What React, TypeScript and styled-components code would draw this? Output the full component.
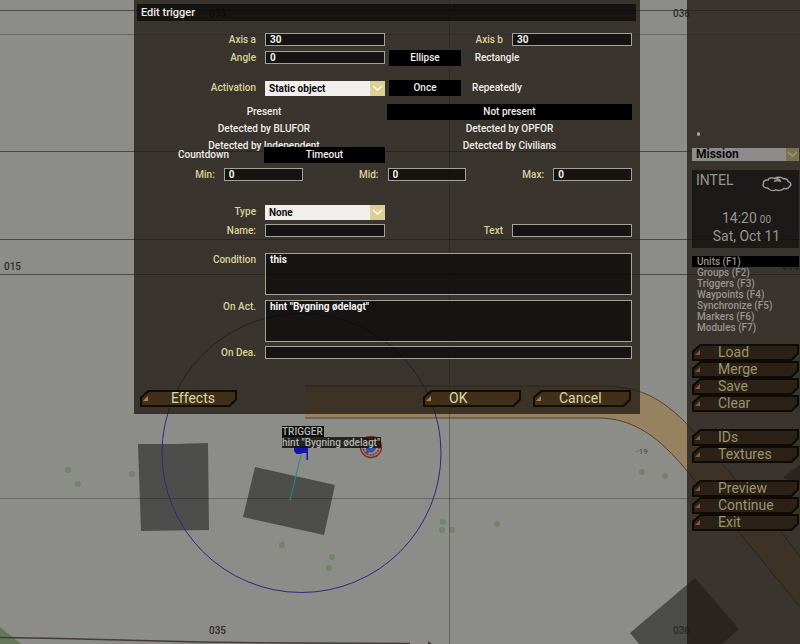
import React from 'react';
import styled, { createGlobalStyle } from 'styled-components';

const GlobalStyle = createGlobalStyle`
  * { box-sizing: border-box; }
  body {
    margin: 0;
    background: #8c8c88;
    font-family: Roboto, 'Liberation Sans', sans-serif;
    font-size: 10px;
    line-height: 12px;
  }
  button, input, select, textarea { font: inherit; color: inherit; margin: 0; }
`;

const Page = styled.div`
  position: relative;
  display: flex;
  align-items: stretch;
  min-height: 100vh;
  overflow: hidden;
`;

const MapLayer = styled.div`
  position: absolute;
  inset: 0;
  background: #8c8c88;
`;

const MapCanvas = styled.svg`
  display: block;
  width: 100%;
  height: 100%;
`;

const MarkerTip = styled.div`
  position: absolute;
  left: 282px;
  top: 426px;
  display: flex;
  flex-direction: column;
  align-items: flex-start;
  color: #b4b4b0;
  font-weight: 500;
  line-height: 11px;
`;

const TipLine = styled.span<{ $faded?: boolean }>`
  background: ${(p) => (p.$faded ? 'rgba(18, 18, 17, 0.85)' : '#0c0c0b')};
  padding-right: 1px;
  white-space: nowrap;
`;

const Main = styled.main`
  position: relative;
  flex: 1;
  min-width: 0;
  padding: 0 47px 0 134px;
`;

const Dialog = styled.form`
  background: rgba(32, 26, 20, 0.77);
  padding: 4px 4px 7px 3px;
`;

const TitleBar = styled.h1`
  margin: 0;
  padding: 0 4px;
  background: rgba(0, 0, 0, 0.6);
  color: #eceae4;
  font-size: 11px;
  font-weight: 500;
  line-height: 17px;
`;

const Body = styled.div`
  padding: 12px 4px 0 6px;
`;

const Row = styled.div<{ $top?: number }>`
  display: grid;
  grid-template-columns: 122fr 120fr 127fr 120fr;
  align-items: start;
  margin-top: ${(p) => p.$top ?? 0}px;
`;

const Label = styled.label`
  padding-right: 9px;
  text-align: right;
  color: #d9d29a;
  font-size: 10px;
  font-weight: 500;
  line-height: 13px;
  white-space: nowrap;
`;

const Field = styled.input`
  display: block;
  width: 100%;
  min-width: 0;
  height: 13px;
  padding: 0 4px;
  border: 1px solid #a3a19c;
  border-radius: 0;
  background: rgba(0, 0, 0, 0.6);
  color: #f2f2f0;
  font-size: 10px;
  font-weight: 700;
  line-height: 11px;
  outline: none;
`;

const WideField = styled(Field)`
  grid-column: 2 / -1;
`;

const CodeArea = styled.textarea`
  grid-column: 2 / -1;
  display: block;
  width: 100%;
  height: 42px;
  padding: 0 4px;
  border: 1px solid #a3a19c;
  border-radius: 0;
  background: rgba(0, 0, 0, 0.6);
  color: #f2f2f0;
  font-weight: 700;
  font-size: 10px;
  line-height: 12px;
  resize: none;
  outline: none;
`;

const SelectBox = styled.div<{ $dim?: boolean }>`
  display: grid;
  grid-template-columns: 1fr ${(p) => (p.$dim ? '13px' : '15px')};
  height: ${(p) => (p.$dim ? '13px' : '15px')};
  background: ${(p) => (p.$dim ? '#8e8b8b' : '#f1efee')};
  color: #0a0a0a;
`;

const SelectInput = styled.select<{ $dim?: boolean }>`
  grid-area: 1 / 1 / 2 / 3;
  width: 100%;
  min-width: 0;
  height: 100%;
  padding: 0 4px;
  border: 0;
  background: transparent;
  appearance: none;
  font-size: ${(p) => (p.$dim ? '12px' : '10px')};
  font-weight: 700;
  line-height: 13px;
  outline: none;
`;

const SelectArrow = styled.span<{ $dim?: boolean }>`
  grid-area: 1 / 2 / 2 / 3;
  display: flex;
  align-items: center;
  justify-content: center;
  background: ${(p) => (p.$dim ? '#7b7350' : '#ddd096')};
  color: ${(p) => (p.$dim ? '#9c9678' : '#fbf8ea')};
  pointer-events: none;
`;

const Toggles = styled.div<{ $columns: string }>`
  display: grid;
  grid-template-columns: ${(p) => p.$columns};
`;

const SideToggles = styled(Toggles)`
  grid-column: 3 / -1;
  margin-top: -1px;
  padding-left: 4px;
`;

const ActivationToggles = styled(Toggles)`
  margin-top: 8px;
  column-gap: 2px;
  row-gap: 1px;
`;

const TimingToggles = styled(Toggles)`
  position: relative;
  margin-top: -7px;
`;

const Toggle = styled.button`
  height: 16px;
  padding: 0;
  border: 0;
  background: transparent;
  color: #eeeeea;
  font-weight: 500;
  line-height: 16px;
  text-align: center;
  white-space: nowrap;

  &[aria-pressed='true'] { background: #000; }
`;

const Timing = styled.div`
  display: grid;
  grid-template-columns: 81fr 79fr 85fr 79fr 87fr 79fr;
  margin-top: 5px;
`;

const Footer = styled.footer`
  display: grid;
  grid-template-columns: 97fr 186fr 98fr 12fr 98fr;
  margin-top: 31px;
  padding: 0 5px 0 3px;
`;

const AngledButton = styled.button<{ $bright?: boolean; $inset?: number; $column?: number }>`
  position: relative;
  grid-column: ${(p) => p.$column ?? 'auto'};
  display: block;
  width: 100%;
  height: 17px;
  padding: 0 0 0 ${(p) => p.$inset ?? 26}px;
  border: 0;
  background: ${(p) => (p.$bright ? '#120c06' : '#0e0b07')};
  clip-path: polygon(8px 0, 100% 0, 100% calc(100% - 7px), calc(100% - 7px) 100%, 0 100%, 0 7px);
  color: ${(p) => (p.$bright ? '#dcd7a6' : '#98946f')};
  font-size: 14px;
  line-height: 17px;
  text-align: left;

  &::before {
    content: '';
    position: absolute;
    inset: 2px;
    background: ${(p) => (p.$bright ? '#40301a' : '#2c2116')};
    clip-path: polygon(7px 0, 100% 0, 100% calc(100% - 6px), calc(100% - 6px) 100%, 0 100%, 0 6px);
  }
`;

const ButtonMark = styled.svg<{ $bright?: boolean }>`
  position: absolute;
  left: 3px;
  top: 6px;
  width: 5px;
  height: 5px;
  fill: ${(p) => (p.$bright ? '#b57d5a' : '#80583f')};
`;

const ButtonText = styled.span`
  position: relative;
  white-space: nowrap;
`;

const Sidebar = styled.aside`
  position: relative;
  flex: 0 0 113px;
  padding: 132px 1px 0 5px;
  background: rgba(32, 26, 20, 0.77);
  color: #98958f;
`;

const Dot = styled.div`
  width: 3px;
  height: 4px;
  margin: 0 0 12px 5px;
  border-radius: 2px;
  background: #a3a19c;
`;

const Intel = styled.section`
  margin-top: 9px;
  padding: 2px 4px 5px;
  height: 78px;
  background: rgba(12, 12, 12, 0.62);
  font-size: 14px;
  line-height: 16px;
`;

const IntelHead = styled.div`
  display: flex;
  justify-content: space-between;
  height: 38px;
`;

const IntelTitle = styled.h2`
  margin: 0;
  font-size: 14px;
  font-weight: 400;
`;

const Cloud = styled.svg`
  width: 30px;
  height: 16px;
  margin: 4px 3px 0 0;
`;

const IntelLine = styled.div`
  line-height: 16px;
  padding-left: 2px;
  text-align: center;
  white-space: nowrap;
`;

const Seconds = styled.small`
  margin-left: 3px;
  font-size: 10px;
`;

const ModeList = styled.nav`
  display: flex;
  flex-direction: column;
  margin: 8px 0 11px;
`;

const Mode = styled.button<{ $active?: boolean }>`
  height: 11px;
  padding: 0 5px;
  border: 0;
  background: ${(p) => (p.$active ? '#000' : 'transparent')};
  font-size: 10px;
  font-weight: 500;
  line-height: 11px;
  text-align: left;
  white-space: nowrap;
`;

const ButtonGroup = styled.div`
  display: flex;
  flex-direction: column;
  margin-bottom: 17px;
`;

const TREES = [
  [68, 470], [78, 484], [132, 474], [282, 545], [332, 557], [329, 568],
  [443, 522], [442, 530], [452, 530], [497, 524], [642, 472], [665, 476],
];

const GRID_LINES = [
  { y: 10, strong: true },
  { y: 34, strong: false },
  { y: 151, strong: true },
  { y: 239, strong: true },
  { y: 274, strong: true },
  { y: 498, strong: false },
];

const ROAD_TOP = 'M305 386 H600 C638 386 660 396 690 427 C706 445 716 457 730 473 L780 530 L800 557';
const ROAD_BOTTOM = 'M305 418 H598 C634 418 660 438 687 471 L737 530 L800 607';

function TerrainMap() {
  return (
    <MapLayer>
      <MapCanvas aria-label="Terrain map">
        <path
          d="M305 386 H600 C638 386 660 396 690 427 C706 445 716 457 730 473 L780 530 L800 557 V607 L737 530 L687 471 C660 438 634 418 598 418 H305 Z"
          fill="#968260"
        />
        <path d={ROAD_TOP} fill="none" stroke="#51432f" />
        <path d={ROAD_BOTTOM} fill="none" stroke="#51432f" />
        <polygon points="0,627 21,644 0,644" fill="#68775a" />
        <polygon points="138,444 176,444 208,443 209,530 141,531" fill="#4d4d4c" />
        <polygon points="255,467 335,485 324,535 243,517" fill="#4d4d4c" />
        <polygon points="695,578 739,629 722,644 639,644 630,633" fill="#4b4b4a" />
        <polygon points="783,478 800,464 800,485" fill="#4b4b4a" />
        {TREES.map(([x, y]) => (
          <circle key={`${x}-${y}`} cx={x} cy={y} r="3" fill="#6b8065" opacity="0.8" />
        ))}
        {GRID_LINES.map(({ y, strong }) => (
          <line
            key={y}
            x1="0"
            x2="100%"
            y1={y + 0.5}
            y2={y + 0.5}
            stroke="#1c1c1c"
            strokeOpacity={strong ? 0.6 : 0.3}
          />
        ))}
        <line x1="449.5" x2="449.5" y1="0" y2="100%" stroke="#1c1c1c" strokeOpacity="0.35" />
        <path d="M0 637.5 L60 638.5 L200 642 L300 643 L410 643.5" fill="none" stroke="#433b3d" strokeWidth="1.3" />
        <path d="M428 641 l4 3 h-4z" fill="#433b3d" />
        <circle cx="301.5" cy="453" r="139.5" fill="none" stroke="#2b2b80" />
        <line x1="301" x2="290" y1="455" y2="500" stroke="#1f8c86" />
        <path d="M294 446 h14 v14 h-1.500 v-7 h-3 l-3 1 h-4 l-2.500 -3z" fill="#1414a8" />
        <circle cx="371" cy="447" r="10.500" fill="none" stroke="#842a22" strokeWidth="1.300" />
        <circle cx="371" cy="447" r="8" fill="none" stroke="#8e3328" strokeWidth="1.600" strokeDasharray="2 1" />
        <circle cx="371" cy="447" r="6" fill="#909298" />
        <path d="M366 447 h10 v2 l-4 4 -2 -1 -4 2z" fill="#3c4fa5" />
        <g fill="#2d2d2b" fontSize="10" fontWeight="500">
          <text x="4" y="270">015</text>
          <text x="782" y="270">015</text>
          <text x="209" y="17">035</text>
          <text x="209" y="634">035</text>
          <text x="673" y="17">036</text>
          <text x="673" y="634">036</text>
        </g>
        <text x="636" y="454" fill="#515c3c" fontSize="8" fontWeight="500">-19</text>
      </MapCanvas>
      <MarkerTip>
        <TipLine>TRIGGER</TipLine>
        <TipLine $faded>hint "Bygning ødelagt"</TipLine>
      </MarkerTip>
    </MapLayer>
  );
}

function Dropdown({ id, value, label, dim }: { id: string; value: string; label?: string; dim?: boolean }) {
  return (
    <SelectBox $dim={dim}>
      <SelectArrow $dim={dim}>
        <svg width="11" height="7" viewBox="0 0 11 7" fill="none" stroke="currentColor" strokeWidth="1.500">
          <path d="M1 1 L5.500 5 L10 1" />
        </svg>
      </SelectArrow>
      <SelectInput id={id} aria-label={label} $dim={dim} defaultValue={value}>
        <option>{value}</option>
      </SelectInput>
    </SelectBox>
  );
}

function MenuButton({ text, bright, inset, column }: { text: string; bright?: boolean; inset?: number; column?: number }) {
  return (
    <AngledButton type="button" $bright={bright} $inset={inset} $column={column}>
      <ButtonMark $bright={bright} viewBox="0 0 5 5" aria-hidden="true">
        <path d="M5 0 V5 H0 Z" />
      </ButtonMark>
      <ButtonText>{text}</ButtonText>
    </AngledButton>
  );
}

function Choice({ text, on }: { text: string; on?: boolean }) {
  return <Toggle type="button" aria-pressed={!!on}>{text}</Toggle>;
}

function TriggerDialog() {
  return (
    <Dialog>
      <TitleBar>Edit trigger</TitleBar>
      <Body>
        <Row>
          <Label htmlFor="axis-a">Axis a</Label>
          <Field id="axis-a" defaultValue="30" />
          <Label htmlFor="axis-b">Axis b</Label>
          <Field id="axis-b" defaultValue="30" />
        </Row>
        <Row $top={5}>
          <Label htmlFor="angle">Angle</Label>
          <Field id="angle" defaultValue="0" />
          <SideToggles $columns="72fr 72fr 99fr">
            <Choice text="Ellipse" on />
            <Choice text="Rectangle" />
          </SideToggles>
        </Row>
        <Row $top={15}>
          <Label htmlFor="activation">Activation</Label>
          <Dropdown id="activation" value="Static object" />
          <SideToggles $columns="72fr 72fr 99fr">
            <Choice text="Once" on />
            <Choice text="Repeatedly" />
          </SideToggles>
        </Row>
        <ActivationToggles $columns="242fr 245fr">
          <Choice text="Present" />
          <Choice text="Not present" on />
          <Choice text="Detected by BLUFOR" />
          <Choice text="Detected by OPFOR" />
          <Choice text="Detected by Independent" />
          <Choice text="Detected by Civilians" />
        </ActivationToggles>
        <TimingToggles $columns="121fr 121fr 247fr">
          <Choice text="Countdown" />
          <Choice text="Timeout" on />
        </TimingToggles>
        <Timing>
          <Label htmlFor="min">Min:</Label>
          <Field id="min" defaultValue="0" />
          <Label htmlFor="mid">Mid:</Label>
          <Field id="mid" defaultValue="0" />
          <Label htmlFor="max">Max:</Label>
          <Field id="max" defaultValue="0" />
        </Timing>
        <Row $top={24}>
          <Label htmlFor="type">Type</Label>
          <Dropdown id="type" value="None" />
        </Row>
        <Row $top={4}>
          <Label htmlFor="name">Name:</Label>
          <Field id="name" />
          <Label htmlFor="text">Text</Label>
          <Field id="text" />
        </Row>
        <Row $top={16}>
          <Label htmlFor="condition">Condition</Label>
          <CodeArea id="condition" defaultValue="this" />
        </Row>
        <Row $top={5}>
          <Label htmlFor="on-act">On Act.</Label>
          <CodeArea id="on-act" defaultValue={'hint "Bygning ødelagt"'} />
        </Row>
        <Row $top={4}>
          <Label htmlFor="on-dea">On Dea.</Label>
          <WideField id="on-dea" />
        </Row>
      </Body>
      <Footer>
        <MenuButton text="Effects" bright inset={31} column={1} />
        <MenuButton text="OK" bright column={3} />
        <MenuButton text="Cancel" bright column={5} />
      </Footer>
    </Dialog>
  );
}

const MODES = [
  'Units (F1)', 'Groups (F2)', 'Triggers (F3)', 'Waypoints (F4)',
  'Synchronize (F5)', 'Markers (F6)', 'Modules (F7)',
];

const ACTIONS = [
  ['Load', 'Merge', 'Save', 'Clear'],
  ['IDs', 'Textures'],
  ['Preview', 'Continue', 'Exit'],
];

function EditorSidebar() {
  return (
    <Sidebar>
      <Dot />
      <Dropdown id="section" label="Section" value="Mission" dim />
      <Intel>
        <IntelHead>
          <IntelTitle>INTEL</IntelTitle>
          <Cloud viewBox="0 0 30 16" fill="none" stroke="#a09e98" strokeWidth="1.400" strokeLinejoin="round" strokeLinecap="round">
            <path d="M6 12 C2.500 12.500 0 10 1.500 7.500 C1 5 3.500 3.500 6 4.200 C6.500 2 10 1.200 12.500 2.500 C15 0.800 19.500 0.800 21.500 2.800 C24.500 2.500 26 3.500 26 5.500 C29 6 29.800 9 27.500 10.500 C26.500 12.800 24 13 22 12.300 C20.500 14.500 16 15 14 13.800 C11 15 7.500 14.500 6 12 Z" />
            <path d="M12.500 2.500 C15 2.300 17.500 3.300 18.500 5.300 M12.500 5.200 C14.500 4.200 16.500 4.400 18.500 5.300" />
          </Cloud>
        </IntelHead>
        <IntelLine>14:20<Seconds>00</Seconds></IntelLine>
        <IntelLine>Sat, Oct 11</IntelLine>
      </Intel>
      <ModeList aria-label="Edit mode">
        {MODES.map((mode, i) => (
          <Mode key={mode} type="button" $active={i === 0}>{mode}</Mode>
        ))}
      </ModeList>
      {ACTIONS.map((group) => (
        <ButtonGroup key={group[0]}>
          {group.map((text) => <MenuButton key={text} text={text} />)}
        </ButtonGroup>
      ))}
    </Sidebar>
  );
}

export default function App() {
  return (
    <>
      <GlobalStyle />
      <Page>
        <TerrainMap />
        <Main>
          <TriggerDialog />
        </Main>
        <EditorSidebar />
      </Page>
    </>
  );
}
